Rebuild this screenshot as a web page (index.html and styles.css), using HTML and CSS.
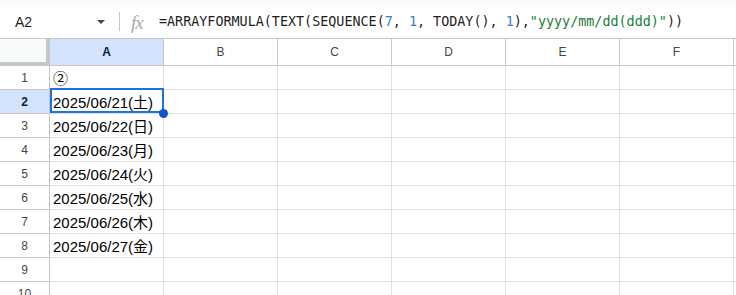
FILE: index.html
```html
<!DOCTYPE html>
<html lang="ja">
<head>
    <meta charset="UTF-8">
    <meta name="viewport" content="width=device-width, initial-scale=1.0">
    <title>ARRAYFORMULA - Sheet</title>
    <link rel="stylesheet" href="styles.css">
</head>
<body>
    <div class="top-strip"></div>

    <!-- Formula bar -->
    <div class="formula-bar">
        <div class="name-box">A2</div>
        <span class="caret"></span>
        <span class="sep"></span>
        <span class="fx">fx</span>
        <div class="formula">=ARRAYFORMULA(TEXT(SEQUENCE(<span class="num">7</span>, <span class="num">1</span>, TODAY(), <span class="num">1</span>),<span class="str">"yyyy/mm/dd(ddd)"</span>))</div>
    </div>

    <!-- Grid -->
    <div class="sheet">
        <div class="corner"></div>
        <div class="col-head active">A</div>
        <div class="col-head">B</div>
        <div class="col-head">C</div>
        <div class="col-head">D</div>
        <div class="col-head">E</div>
        <div class="col-head">F</div>
        <div class="col-head tail"></div>

        <div class="row-head">1</div>
        <div class="cell">②</div>
        <div class="cell"></div><div class="cell"></div><div class="cell"></div><div class="cell"></div><div class="cell"></div><div class="cell tail"></div>

        <div class="row-head active">2</div>
        <div class="cell selected">2025/06/21(土)<span class="sel-box"></span><span class="sel-handle"></span></div>
        <div class="cell"></div><div class="cell"></div><div class="cell"></div><div class="cell"></div><div class="cell"></div><div class="cell tail"></div>

        <div class="row-head">3</div>
        <div class="cell">2025/06/22(日)</div>
        <div class="cell"></div><div class="cell"></div><div class="cell"></div><div class="cell"></div><div class="cell"></div><div class="cell tail"></div>

        <div class="row-head">4</div>
        <div class="cell">2025/06/23(月)</div>
        <div class="cell"></div><div class="cell"></div><div class="cell"></div><div class="cell"></div><div class="cell"></div><div class="cell tail"></div>

        <div class="row-head">5</div>
        <div class="cell">2025/06/24(火)</div>
        <div class="cell"></div><div class="cell"></div><div class="cell"></div><div class="cell"></div><div class="cell"></div><div class="cell tail"></div>

        <div class="row-head">6</div>
        <div class="cell">2025/06/25(水)</div>
        <div class="cell"></div><div class="cell"></div><div class="cell"></div><div class="cell"></div><div class="cell"></div><div class="cell tail"></div>

        <div class="row-head">7</div>
        <div class="cell">2025/06/26(木)</div>
        <div class="cell"></div><div class="cell"></div><div class="cell"></div><div class="cell"></div><div class="cell"></div><div class="cell tail"></div>

        <div class="row-head">8</div>
        <div class="cell">2025/06/27(金)</div>
        <div class="cell"></div><div class="cell"></div><div class="cell"></div><div class="cell"></div><div class="cell"></div><div class="cell tail"></div>

        <div class="row-head">9</div>
        <div class="cell"></div>
        <div class="cell"></div><div class="cell"></div><div class="cell"></div><div class="cell"></div><div class="cell"></div><div class="cell tail"></div>

        <div class="row-head">10</div>
        <div class="cell"></div>
        <div class="cell"></div><div class="cell"></div><div class="cell"></div><div class="cell"></div><div class="cell"></div><div class="cell tail"></div>
    </div>
</body>
</html>
```

FILE: styles.css
```css
body {
    margin: 0;
    padding: 0;
    width: 736px;
    height: 295px;
    overflow: hidden;
    background: #ffffff;
    font-family: "Liberation Sans", Arial, "Noto Sans CJK JP", sans-serif;
    color: #000000;
}

.top-strip {
    height: 5px;
    background: #f9fbfd;
}

/* Formula bar */
.formula-bar {
    height: 33px;
    border-bottom: 1px solid #c4c7c5;
    display: flex;
    align-items: center;
}

.name-box {
    width: 82px;
    padding-left: 15px;
    font-size: 14px;
    color: #1f1f1f;
}

.caret {
    width: 0;
    height: 0;
    border-left: 4px solid transparent;
    border-right: 4px solid transparent;
    border-top: 4px solid #444746;
    margin-top: 1px;
}

.sep {
    width: 1px;
    height: 19px;
    background: #c4c7c5;
    margin-left: 14px;
}

.fx {
    margin-left: 11px;
    width: 18px;
    font-family: "Liberation Serif", serif;
    font-style: italic;
    font-size: 19px;
    color: #a8abae;
    letter-spacing: -1px;
    margin-top: 2px;
}

.formula {
    margin-left: 10px;
    font-family: "DejaVu Sans Mono", monospace;
    font-size: 13.4px;
    color: #1f1f1f;
    white-space: nowrap;
}

.formula .num {
    color: #3a78e0;
}

.formula .str {
    color: #188038;
}

/* Grid */
.sheet {
    display: grid;
    grid-template-columns: 50px repeat(6, 114px) 1fr;
    grid-template-rows: 27px repeat(10, 24px);
}

.corner {
    box-sizing: border-box;
    background: #f8f9fa;
    border-right: 4px solid #c4c7c5;
    border-bottom: 4px solid #c4c7c5;
}

.col-head {
    box-sizing: border-box;
    border-right: 1px solid #c4c7c5;
    border-bottom: 1px solid #c4c7c5;
    display: flex;
    align-items: center;
    justify-content: center;
    font-size: 12px;
    color: #444746;
}

.col-head.active {
    background: #d3e3fd;
    color: #041e49;
    font-weight: bold;
}

.col-head.tail {
    border-right: none;
}

.row-head {
    box-sizing: border-box;
    border-right: 1px solid #c4c7c5;
    border-bottom: 1px solid #c4c7c5;
    display: flex;
    align-items: center;
    justify-content: center;
    font-size: 12px;
    color: #444746;
}

.row-head.active {
    background: #d3e3fd;
    color: #041e49;
    font-weight: bold;
}

.cell {
    box-sizing: border-box;
    border-right: 1px solid #e1e1e1;
    border-bottom: 1px solid #e1e1e1;
    display: flex;
    align-items: flex-end;
    padding: 0 0 2px 3px;
    font-size: 15px;
    line-height: 17px;
    white-space: nowrap;
}

.cell.tail {
    border-right: none;
}

.cell.selected {
    position: relative;
}

.sel-box {
    position: absolute;
    top: -2px;
    left: 0;
    right: -1px;
    bottom: 0;
    border: 2px solid #1a73e8;
}

.sel-handle {
    position: absolute;
    right: -5px;
    bottom: -5px;
    width: 9px;
    height: 9px;
    border-radius: 50%;
    background: #0b57d0;
}
```
